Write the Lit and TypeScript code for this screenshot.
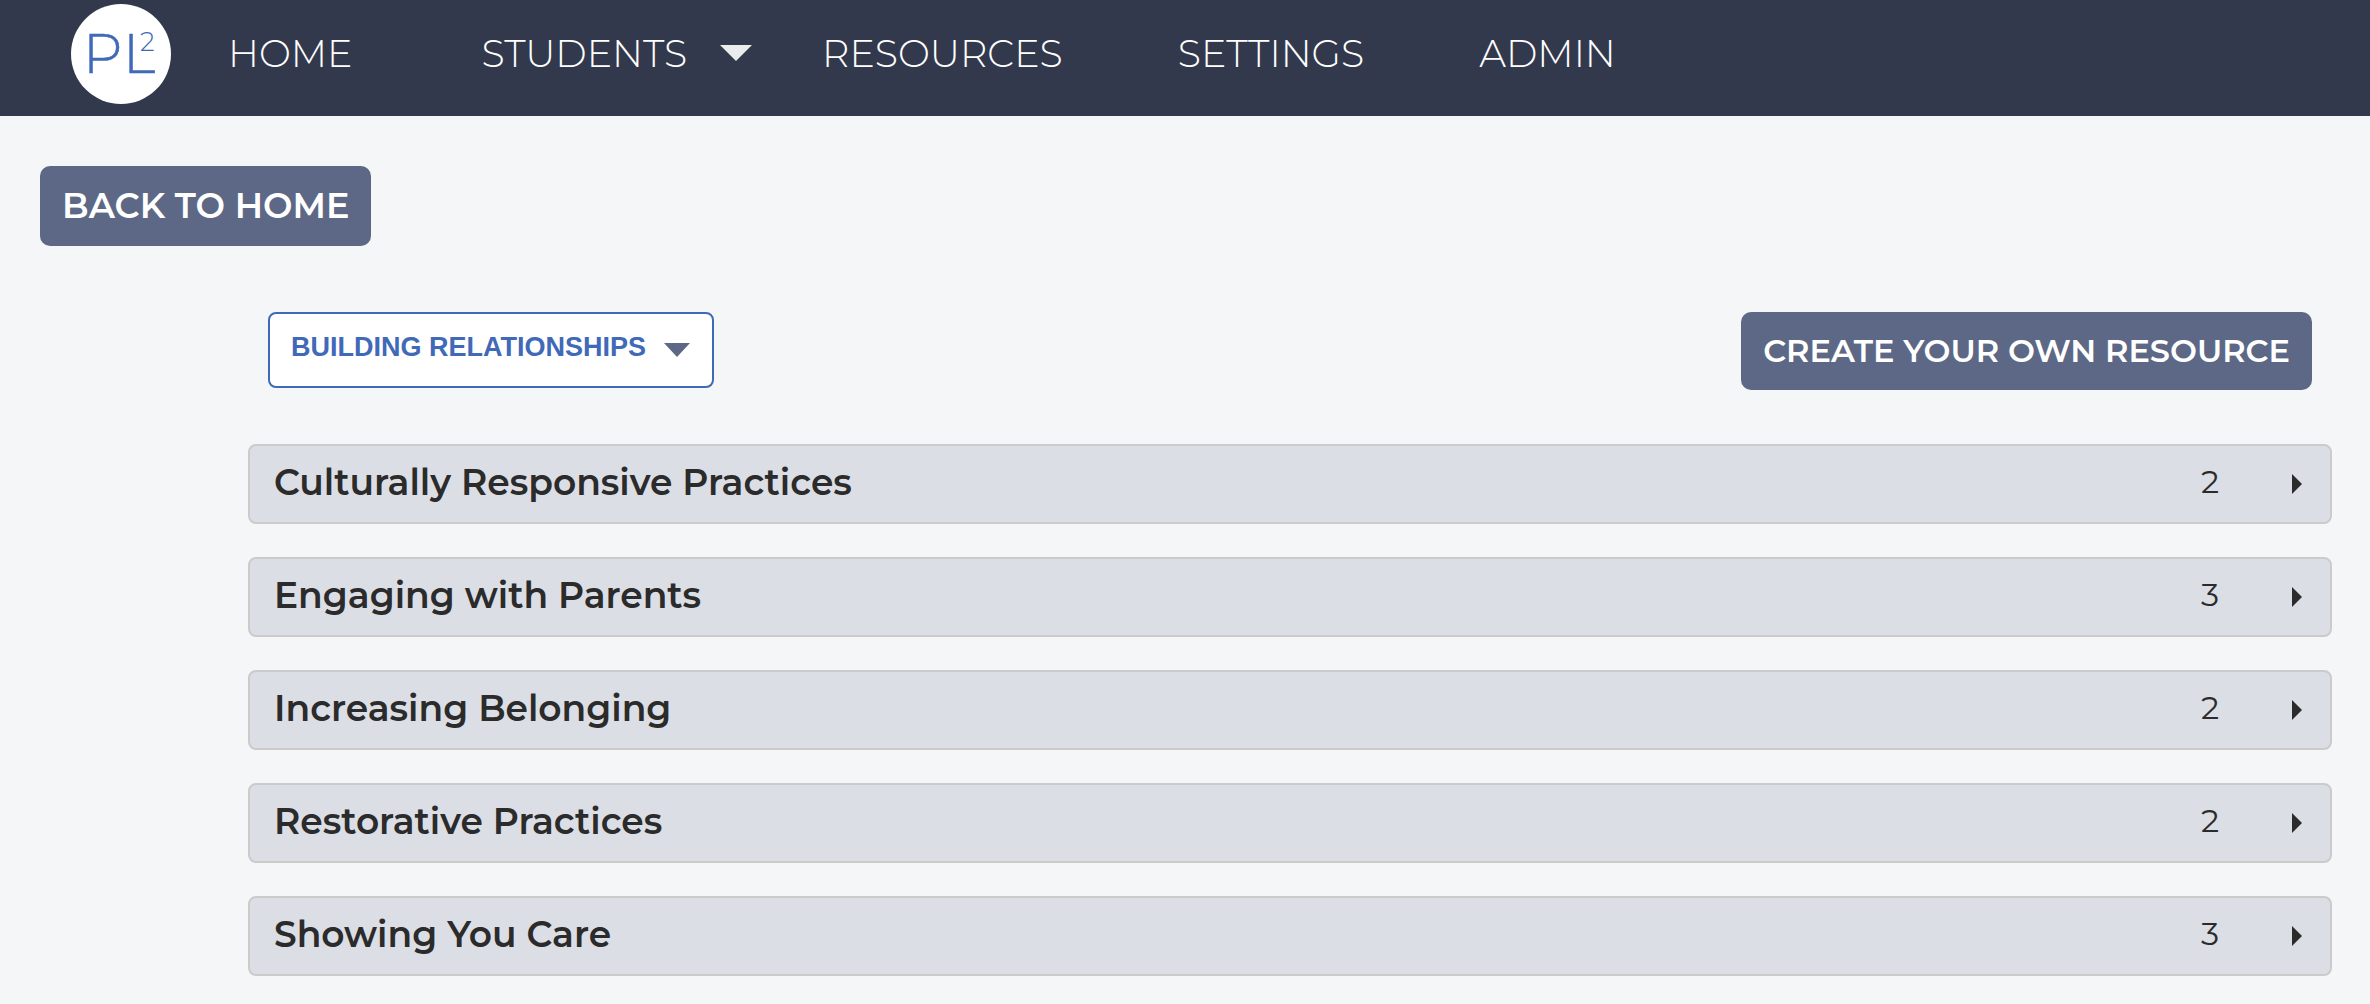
import { LitElement, html, css } from 'lit';
import { customElement, property } from 'lit/decorators.js';

interface Topic {
  title: string;
  count: number;
}

const TOPICS: Topic[] = [
  { title: 'Culturally Responsive Practices', count: 2 },
  { title: 'Engaging with Parents', count: 3 },
  { title: 'Increasing Belonging', count: 2 },
  { title: 'Restorative Practices', count: 2 },
  { title: 'Showing You Care', count: 3 },
];

@customElement('nav-bar')
class NavBar extends LitElement {
  static styles = css`
    :host {
      display: block;
      background: #33394d;
    }
    .bar {
      display: flex;
      align-items: center;
      padding: 4px 68px 12px 71px;
    }
    .logo {
      display: block;
      flex: none;
      width: 100px;
      height: 100px;
    }
    .menu {
      display: flex;
      align-items: center;
      margin: 0;
      padding: 0 0 0 57px;
      list-style: none;
    }
    .item {
      display: flex;
      align-items: center;
      gap: 33px;
      margin-right: 115px;
    }
    .item.first {
      margin-right: 129px;
    }
    .item.parent {
      margin-right: 70px;
    }
    .link {
      color: #fff;
      font-weight: 300;
      font-size: 38px;
      line-height: 48px;
      text-decoration: none;
    }
    .toggle {
      display: block;
      padding: 0 0 2px;
      border: 0;
      background: none;
    }
    .caret {
      display: block;
    }
  `;

  render() {
    return html`
      <nav class="bar">
        <svg class="logo" viewBox="0 0 100 100" role="img" aria-label="PL2">
          <circle cx="50" cy="50" r="50" fill="#fff" />
          <g fill="#4069b8" font-family="Montserrat, Inter, sans-serif" font-weight="300">
            <text x="12" y="69" font-size="55" stroke="#4069b8" stroke-width="0.5">P</text>
            <text x="52" y="69" font-size="55" stroke="#4069b8" stroke-width="0.5">L</text>
            <text x="69" y="47" font-size="26">2</text>
          </g>
        </svg>
        <ul class="menu">
          <li class="item first"><a class="link" href="#home">HOME</a></li>
          <li class="item parent">
            <a class="link" href="#students">STUDENTS</a>
            <button class="toggle" aria-label="Students menu">
              <svg class="caret" width="32" height="16" viewBox="0 0 32 16">
                <path d="M0 0H32L16 16Z" fill="#ebeced" />
              </svg>
            </button>
          </li>
          <li class="item"><a class="link" href="#resources">RESOURCES</a></li>
          <li class="item"><a class="link" href="#settings">SETTINGS</a></li>
          <li class="item"><a class="link" href="#admin">ADMIN</a></li>
        </ul>
      </nav>
    `;
  }
}

@customElement('topic-row')
class TopicRow extends LitElement {
  static styles = css`
    :host {
      display: block;
    }
    .row {
      display: flex;
      align-items: center;
      box-sizing: border-box;
      width: 100%;
      padding: 14px 28px 14px 24px;
      border: 2px solid #cbcbcb;
      border-radius: 8px;
      background: #dcdee6;
      color: #2b2b2b;
      font: inherit;
      text-align: left;
    }
    .title {
      flex: 1;
      padding-bottom: 4px;
      font-weight: 600;
      font-size: 36px;
      line-height: 44px;
    }
    .count {
      width: 91px;
      padding-bottom: 4px;
      font-size: 32px;
      line-height: 44px;
    }
    .arrow {
      display: block;
    }
  `;

  @property() heading = '';
  @property({ type: Number }) count = 0;

  render() {
    return html`
      <button class="row" aria-expanded="false">
        <span class="title">${this.heading}</span>
        <span class="count">${this.count}</span>
        <svg class="arrow" width="10" height="20" viewBox="0 0 10 20">
          <path d="M0 0L10 10L0 20Z" fill="#2b2b2b" />
        </svg>
      </button>
    `;
  }
}

@customElement('app-root')
class AppRoot extends LitElement {
  static styles = css`
    :host {
      display: block;
      min-height: 100vh;
      background: #f5f6f8;
      font-family: Montserrat, Inter, sans-serif;
    }
    .page {
      padding: 50px 38px 28px 40px;
    }
    .button {
      display: inline-block;
      border-radius: 10px;
      background: #5d6886;
      color: #fff;
      font-weight: 600;
      text-decoration: none;
      white-space: nowrap;
    }
    .back {
      padding: 16px 22px;
      font-size: 35px;
      line-height: 48px;
    }
    .content {
      margin: 66px 0 0 208px;
    }
    .toolbar {
      display: flex;
      justify-content: space-between;
      align-items: flex-start;
      padding: 0 20px;
    }
    .picker {
      display: grid;
      align-items: center;
    }
    .select {
      grid-area: 1 / 1;
      appearance: none;
      height: 76px;
      padding: 0 65px 6px 21px;
      border: 2px solid #4069b8;
      border-radius: 8px;
      background: #fff;
      color: #4069b8;
      font: 700 27px 'Liberation Sans', Arial, sans-serif;
    }
    .caret {
      grid-area: 1 / 1;
      justify-self: end;
      margin-right: 24px;
      pointer-events: none;
    }
    .create {
      padding: 15px 22px;
      border: 0;
      font-family: inherit;
      font-size: 32px;
      line-height: 48px;
    }
    .topics {
      display: flex;
      flex-direction: column;
      gap: 33px;
      margin-top: 54px;
    }
  `;

  render() {
    return html`
      <nav-bar></nav-bar>
      <main class="page">
        <a class="button back" href="#home">BACK TO HOME</a>
        <section class="content">
          <div class="toolbar">
            <div class="picker">
              <select class="select" aria-label="Resource category">
                <option>BUILDING RELATIONSHIPS</option>
              </select>
              <svg class="caret" width="26" height="14" viewBox="0 0 26 14">
                <path d="M0 0H26L13 14Z" fill="#5d6886" />
              </svg>
            </div>
            <button class="button create">CREATE YOUR OWN RESOURCE</button>
          </div>
          <div class="topics">
            ${TOPICS.map(
              (topic) => html`<topic-row .heading=${topic.title} .count=${topic.count}></topic-row>`,
            )}
          </div>
        </section>
      </main>
    `;
  }
}
